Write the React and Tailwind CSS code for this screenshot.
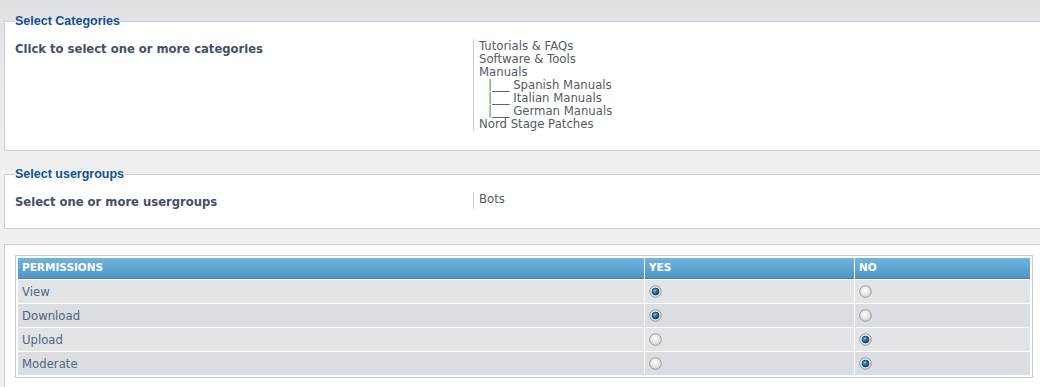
import React from "react";

const categories = [
  { label: "Tutorials & FAQs" },
  { label: "Software & Tools" },
  { label: "Manuals" },
  { label: "Spanish Manuals", child: true },
  { label: "Italian Manuals", child: true },
  { label: "German Manuals", child: true },
  { label: "Nord Stage Patches" },
];

const permissions = [
  { name: "View", yes: true },
  { name: "Download", yes: true },
  { name: "Upload", yes: false },
  { name: "Moderate", yes: false },
];

const Radio = ({ checked }) => (
  <svg width="13" height="13" viewBox="0 0 13 13" className="block">
    <defs>
      <radialGradient id="rb" cx="45%" cy="40%" r="60%">
        <stop offset="0%" stopColor="#ffffff" />
        <stop offset="100%" stopColor="#d4d4d4" />
      </radialGradient>
      <radialGradient id="rd" cx="40%" cy="35%" r="65%">
        <stop offset="0%" stopColor="#6cc0f0" />
        <stop offset="55%" stopColor="#1a74b0" />
        <stop offset="100%" stopColor="#06385e" />
      </radialGradient>
    </defs>
    <circle cx="6.5" cy="6.5" r="5.8" fill="url(#rb)" stroke="#9a9a9a" strokeWidth="1" />
    {checked && (
      <circle cx="6.5" cy="6.5" r="3.4" fill="url(#rd)" stroke="#1d3a55" strokeWidth="0.8" />
    )}
  </svg>
);

const Section = ({ legend, children, className = "" }) => (
  <fieldset
    className={`ml-[4px] -mr-[20px] bg-white border border-[#d0d0d0] px-[10px] ${className}`}
  >
    {legend && (
      <legend className="px-0 text-[12.5px] leading-[16px] font-bold text-[#115098] font-['Liberation_Sans',Arial,sans-serif]">
        {legend}
      </legend>
    )}
    {children}
  </fieldset>
);

export default function App() {
  return (
    <div className="w-[1040px] h-[387px] overflow-hidden bg-[#efefef] bg-[linear-gradient(to_bottom,#dfe0e4_0px,#e4e5e8_40px,#efefef_160px)] font-['DejaVu_Sans',Verdana,sans-serif]">
      <div className="pt-[13px]">
        <Section legend="Select Categories" className="pb-[19px]">
          <div className="flex pt-[10px]">
            <div className="w-[458px] pt-[4px] text-[11.6px] leading-[13px] font-bold text-[#425067]">
              Click to select one or more categories
            </div>
            <div className="border-l border-[#cccccc] pl-[5px] pt-px text-[11.7px] leading-[13px] text-[#555b66]">
              {categories.map(({ label, child }) => (
                <div key={label} className={child ? "pl-[9px] whitespace-pre" : ""}>
                  {child ? (
                    <>
                      <span className="text-[#3f8f3f]">|</span>
                      {`___ ${label}`}
                    </>
                  ) : (
                    label
                  )}
                </div>
              ))}
            </div>
          </div>
        </Section>

        <Section legend="Select usergroups" className="mt-[15px] pb-[19px]">
          <div className="flex pt-[10px]">
            <div className="w-[458px] pt-[4px] text-[11.6px] leading-[13px] font-bold text-[#425067]">
              Select one or more usergroups
            </div>
            <div className="border-l border-[#cccccc] pl-[5px] pt-px text-[11.7px] leading-[13px] text-[#555b66]">
              Bots
            </div>
          </div>
        </Section>

        <Section className="mt-[15px] pt-[10px] pb-[20px]">
          <div className="w-[1018px] border border-[#cccccc] p-px bg-white">
            <table className="border-separate border-spacing-[1px] text-[11.7px]">
              <thead>
                <tr>
                  {["PERMISSIONS", "YES", "NO"].map((h, i) => (
                    <th
                      key={h}
                      className={`h-[21px] pl-[4px] text-left align-middle text-[10.5px] font-bold text-white bg-[linear-gradient(to_bottom,#72b3db,#4f96c7)] border-b border-[#3a7fb2] ${
                        i === 0 ? "w-[626px]" : i === 1 ? "w-[209px]" : "w-[175px]"
                      }`}
                    >
                      {h}
                    </th>
                  ))}
                </tr>
              </thead>
              <tbody>
                {permissions.map(({ name, yes }, idx) => {
                  const bg = idx % 2 === 0 ? "bg-[#e2e5e8]" : "bg-[#dadde1]";
                  return (
                    <tr key={name}>
                      <td className={`h-[23px] pl-[4px] pt-px text-[#536482] leading-[13px] ${bg}`}>
                        {name}
                      </td>
                      <td className={`h-[23px] pl-[4px] ${bg}`}>
                        <Radio checked={yes} />
                      </td>
                      <td className={`h-[23px] pl-[4px] ${bg}`}>
                        <Radio checked={!yes} />
                      </td>
                    </tr>
                  );
                })}
              </tbody>
            </table>
          </div>
        </Section>
      </div>
    </div>
  );
}
